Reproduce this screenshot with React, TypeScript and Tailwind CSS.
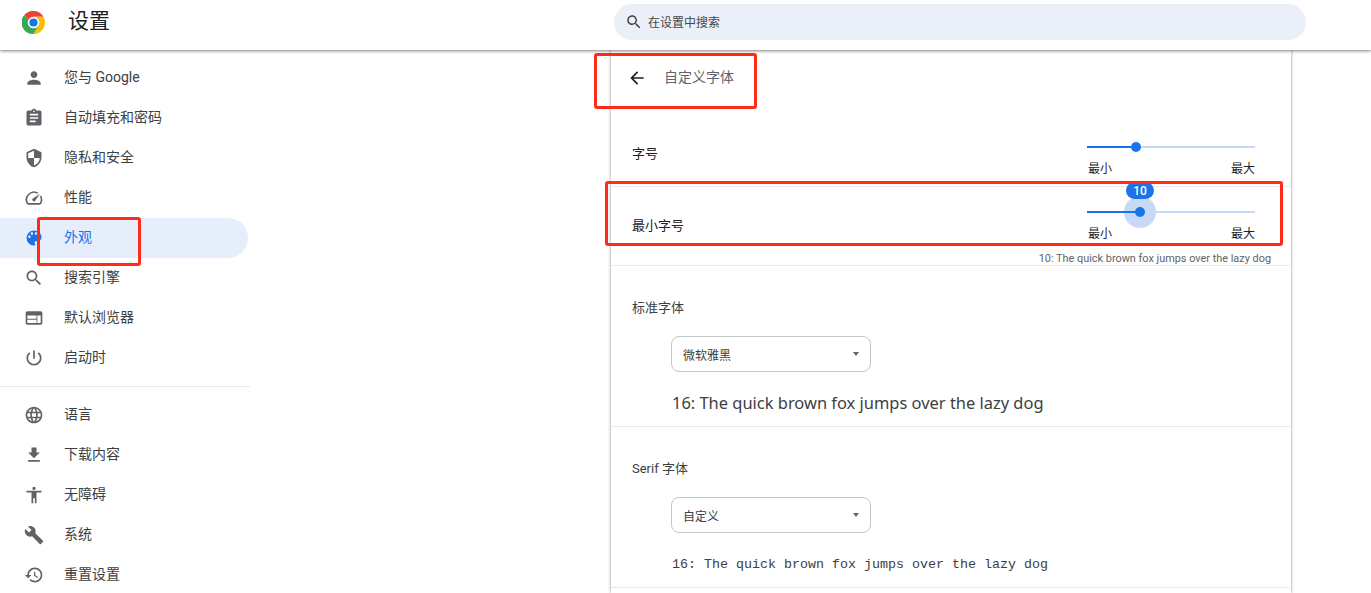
import React from 'react';

const cjk = "font-['Roboto','Noto_Sans_CJK_SC',sans-serif]";

const ICONS = {
  person: 'M12 12c2.21 0 4-1.79 4-4s-1.79-4-4-4-4 1.79-4 4 1.79 4 4 4zm0 2c-2.67 0-8 1.34-8 4v2h16v-2c0-2.66-5.33-4-8-4z',
  assignment: 'M19 3h-4.18C14.4 1.84 13.3 1 12 1c-1.3 0-2.4.84-2.82 2H5c-1.1 0-2 .9-2 2v14c0 1.1.9 2 2 2h14c1.1 0 2-.9 2-2V5c0-1.1-.9-2-2-2zm-7 0c.55 0 1 .45 1 1s-.45 1-1 1-1-.45-1-1 .45-1 1-1zm2 14H7v-2h7v2zm3-4H7v-2h10v2zm0-4H7V7h10v2z',
  shield: 'M12 1L3 5v6c0 5.55 3.84 10.74 9 12 5.16-1.26 9-6.45 9-12V5l-9-4zm0 10.99h7c-.53 4.12-3.28 7.79-7 8.94V12H5V6.3l7-3.11v8.8z',
  speed: 'M20.38 8.57l-1.23 1.85a8 8 0 0 1-.22 7.58H5.07A8 8 0 0 1 15.58 6.85l1.85-1.23A10 10 0 0 0 3.35 19a2 2 0 0 0 1.72 1h13.85a2 2 0 0 0 1.74-1 10 10 0 0 0-.27-10.44zm-9.79 6.84a2 2 0 0 0 2.83 0l5.66-8.49-8.49 5.66a2 2 0 0 0 0 2.83z',
  palette: 'M12 3a9 9 0 0 0 0 18c.83 0 1.5-.67 1.5-1.5 0-.39-.15-.74-.39-1.01-.23-.26-.38-.61-.38-.99 0-.83.67-1.5 1.5-1.5H16c2.76 0 5-2.24 5-5 0-4.42-4.03-8-9-8zm-5.5 9c-.83 0-1.5-.67-1.5-1.5S5.67 9 6.5 9 8 9.67 8 10.5 7.33 12 6.5 12zm3-4C8.67 8 8 7.33 8 6.5S8.67 5 9.5 5s1.5.67 1.5 1.5S10.33 8 9.5 8zm5 0c-.83 0-1.5-.67-1.5-1.5S13.67 5 14.5 5s1.5.67 1.5 1.5S15.33 8 14.5 8zm3 4c-.83 0-1.5-.67-1.5-1.5S16.67 9 17.5 9s1.5.67 1.5 1.5-.67 1.5-1.5 1.5z',
  search: 'M15.5 14h-.79l-.28-.27C15.41 12.59 16 11.11 16 9.5 16 5.91 13.09 3 9.5 3S3 5.91 3 9.5 5.91 16 9.5 16c1.61 0 3.09-.59 4.23-1.57l.27.28v.79l5 4.99L20.49 19l-4.99-5zm-6 0C7.01 14 5 11.99 5 9.5S7.01 5 9.5 5 14 7.01 14 9.5 11.99 14 9.5 14z',
  web: 'M20 4H4c-1.1 0-1.99.9-1.99 2L2 18c0 1.1.9 2 2 2h16c1.1 0 2-.9 2-2V6c0-1.1-.9-2-2-2zm-5 14H4v-4h11v4zm0-5H4V9h11v4zm5 5h-4V9h4v9z',
  power: 'M13 3h-2v10h2V3zm4.83 2.17l-1.42 1.42C17.99 7.86 19 9.81 19 12c0 3.87-3.13 7-7 7s-7-3.13-7-7c0-2.19 1.01-4.14 2.58-5.42L6.17 5.17C4.23 6.82 3 9.26 3 12c0 4.97 4.03 9 9 9s9-4.03 9-9c0-2.74-1.23-5.18-3.17-6.83z',
  language: 'M11.99 2C6.47 2 2 6.48 2 12s4.47 10 9.99 10C17.52 22 22 17.52 22 12S17.52 2 11.99 2zm6.93 6h-2.95c-.32-1.25-.78-2.45-1.38-3.56 1.84.63 3.37 1.91 4.33 3.56zM12 4.04c.83 1.2 1.48 2.53 1.91 3.96h-3.82c.43-1.43 1.08-2.76 1.91-3.96zM4.26 14C4.1 13.36 4 12.69 4 12s.1-1.36.26-2h3.38c-.08.66-.14 1.32-.14 2 0 .68.06 1.34.14 2H4.26zm.82 2h2.95c.32 1.25.78 2.45 1.38 3.56-1.84-.63-3.37-1.9-4.33-3.56zm2.95-8H5.08c.96-1.66 2.49-2.93 4.33-3.56C8.81 5.55 8.35 6.75 8.03 8zM12 19.96c-.83-1.2-1.48-2.53-1.91-3.96h3.82c-.43 1.43-1.08 2.76-1.91 3.96zM14.34 14H9.66c-.09-.66-.16-1.32-.16-2 0-.68.07-1.35.16-2h4.68c.09.65.16 1.32.16 2 0 .68-.07 1.34-.16 2zm.25 5.56c.6-1.11 1.06-2.31 1.38-3.56h2.95c-.96 1.65-2.49 2.93-4.33 3.56zM16.36 14c.08-.66.14-1.32.14-2 0-.68-.06-1.34-.14-2h3.38c.16.64.26 1.31.26 2s-.1 1.36-.26 2h-3.38z',
  download: 'M19 9h-4V3H9v6H5l7 7 7-7zM5 18v2h14v-2H5z',
  accessibility: 'M12 2c1.1 0 2 .9 2 2s-.9 2-2 2-2-.9-2-2 .9-2 2-2zm9 7h-6v13h-2v-6h-2v6H9V9H3V7h18v2z',
  build: 'M22.7 19l-9.1-9.1c.9-2.3.4-5-1.5-6.9-2-2-5-2.4-7.4-1.3L9 6 6 9 1.6 4.7C.4 7.1.9 10.1 2.9 12.1c1.9 1.9 4.6 2.4 6.9 1.5l9.1 9.1c.4.4 1 .4 1.4 0l2.3-2.3c.5-.4.5-1.1.1-1.4z',
  restore: 'M13 3c-4.97 0-9 4.03-9 9H1l3.89 3.89.07.14L9 12H6c0-3.87 3.13-7 7-7s7 3.13 7 7-3.13 7-7 7c-1.93 0-3.68-.79-4.94-2.06l-1.42 1.42C8.27 19.99 10.51 21 13 21c4.97 0 9-4.03 9-9s-4.03-9-9-9zm-1 5v5l4.28 2.54.72-1.21-3.5-2.08V8H12z',
  back: 'M20 11H7.83l5.59-5.59L12 4l-8 8 8 8 1.41-1.41L7.83 13H20v-2z',
};

const Icon: React.FC<{ d: string; className?: string }> = ({ d, className }) => (
  <svg viewBox="0 0 24 24" fill="currentColor" className={className}>
    <path d={d} />
  </svg>
);

const ChromeLogo = () => (
  <svg viewBox="0 0 24 24" className="w-[23px] h-[23px]">
    <path d="M12 0a12 12 0 0 1 10.39 6H12a6 6 0 0 0-5.2 3L2.2 4.4A12 12 0 0 1 12 0z" fill="#ea4335" />
    <path d="M22.39 6A12 12 0 0 1 12 24l5.2-9A6 6 0 0 0 17.2 9 6 6 0 0 0 12 6z" fill="#fbbc04" />
    <path d="M12 24A12 12 0 0 1 2.2 4.4L6.8 9a6 6 0 0 0 0 6 6 6 0 0 0 5.2 3 6 6 0 0 0 5.2-3z" fill="#34a853" />
    <circle cx="12" cy="12" r="5.4" fill="#fff" />
    <circle cx="12" cy="12" r="4.3" fill="#1a73e8" />
  </svg>
);

const MENU_TOP = [
  { icon: ICONS.person, label: '您与 Google' },
  { icon: ICONS.assignment, label: '自动填充和密码' },
  { icon: ICONS.shield, label: '隐私和安全' },
  { icon: ICONS.speed, label: '性能' },
  { icon: ICONS.palette, label: '外观', active: true },
  { icon: ICONS.search, label: '搜索引擎' },
  { icon: ICONS.web, label: '默认浏览器' },
  { icon: ICONS.power, label: '启动时' },
];

const MENU_BOTTOM = [
  { icon: ICONS.language, label: '语言' },
  { icon: ICONS.download, label: '下载内容' },
  { icon: ICONS.accessibility, label: '无障碍' },
  { icon: ICONS.build, label: '系统' },
  { icon: ICONS.restore, label: '重置设置' },
];

const MenuItem: React.FC<{ icon: string; label: string; active?: boolean }> = ({ icon, label, active }) => (
  <div className={`h-10 w-[248px] flex items-center pl-6 rounded-r-full ${active ? 'bg-[#e6eefb] text-[#1a73e8]' : 'text-[#3c4043]'}`}>
    <Icon d={icon} className={`w-5 h-5 shrink-0 ${active ? 'text-[#1a73e8]' : 'text-[#5f6368]'}`} />
    <span className="ml-5 mb-[1px] text-[14px]">{label}</span>
  </div>
);

const Slider: React.FC<{ active?: boolean }> = ({ active }) => (
  <div className="w-[168px] relative">
    <div className="h-[2px] relative">
      {active && <div className="absolute left-[37px] top-[-15px] w-8 h-8 rounded-full bg-[#c6daf7]" />}
      <div className="absolute inset-0 bg-[#c6daf7]" />
      <div className={`absolute left-0 top-0 h-[2px] bg-[#1a73e8] ${active ? 'w-[53px]' : 'w-[49px]'}`} />
      <div className={`absolute top-[-4px] w-[10px] h-[10px] rounded-full bg-[#1a73e8] ${active ? 'left-[48px]' : 'left-[44px]'}`} />
      {active && (
        <div className="absolute left-[39px] top-[-29px] w-[28px] h-[17px] rounded-full bg-[#1a73e8] text-white text-[12px] font-medium flex items-center justify-center">10</div>
      )}
    </div>
    <div className="flex justify-between mt-[13px] text-[12px] leading-[16px] text-[#202124]">
      <span className="pl-[1px]">最小</span>
      <span>最大</span>
    </div>
  </div>
);

const FontRow: React.FC<{ title: string; value: string; previewClass: string }> = ({ title, value, previewClass }) => (
  <div className="h-[161px] border-b border-[#e8eaed] pl-[21px] pt-[33px]">
    <div className="text-[13px] leading-[18px] text-[#3c4043]">{title}</div>
    <div className="ml-[39px] mt-[19px] w-[200px] h-9 rounded-lg border border-[#c4c7c5] flex items-center justify-between pl-[11px] pr-[11px]">
      <span className="text-[12px] pt-[3px] text-[#3c4043]">{value}</span>
      <span className="w-0 h-0 border-x-[3.5px] border-x-transparent border-t-[4px] border-t-[#5f6368]" />
    </div>
    <div className={`ml-[40px] mt-[19px] whitespace-nowrap text-[#3c4043] ${previewClass}`}>16: The quick brown fox jumps over the lazy dog</div>
  </div>
);

export default function App() {
  return (
    <div className={`relative w-[1371px] h-[593px] overflow-hidden bg-white flex flex-col ${cjk}`}>
      {/* header */}
      <header className="h-[50px] shrink-0 bg-white flex items-center relative z-10 shadow-[0_1px_3px_rgba(0,0,0,0.5)]">
        <div className="ml-[22px] mt-[-6px] flex items-center">
          <ChromeLogo />
        </div>
        <h1 className="ml-[23px] mt-[-6px] text-[21px] text-[#202124] w-[546px]">设置</h1>
        <div className="h-9 w-[692px] mt-[-6px] rounded-full bg-[#ebf0f8] flex items-center pl-[11px]">
          <Icon d={ICONS.search} className="w-[18px] h-[18px] text-[#444746]" />
          <span className="ml-[5px] pt-[1px] text-[12px] text-[#444746]">在设置中搜索</span>
        </div>
      </header>

      <div className="flex flex-1 min-h-0">
        {/* sidebar */}
        <nav className="w-[250px] shrink-0 pt-2">
          {MENU_TOP.map(m => <MenuItem key={m.label} {...m} />)}
          <div className="h-px bg-[#e8eaed] mt-[8px] mb-[8px] w-[250px]" />
          <div className="mt-[1px]">
            {MENU_BOTTOM.map(m => <MenuItem key={m.label} {...m} />)}
          </div>
        </nav>

        {/* card */}
        <main className="ml-[361px] w-[680px] shrink-0 bg-white shadow-[0_0_3px_rgba(0,0,0,0.45)]">
          <div className="h-[55px] flex items-center pl-[16px]">
            <Icon d={ICONS.back} className="w-5 h-5 text-[#202124]" />
            <span className="ml-[17px] mb-[1px] text-[14px] text-[#5f6368]">自定义字体</span>
          </div>

          <div className="h-[82px] border-b border-[#e8eaed] relative flex justify-end pr-[36px] pt-[41px]">
            <div className="absolute left-[21px] top-[40px] text-[13px] leading-[18px] text-[#202124]">字号</div>
            <Slider />
          </div>

          <div className="h-[79px] border-b border-[#e8eaed] relative flex justify-end pr-[36px] pt-[24px]">
            <div className="absolute left-[21px] top-[30px] text-[13px] leading-[18px] text-[#202124]">最小字号</div>
            <Slider active />
            <div className="absolute right-[20px] top-[65px] text-[10.9px] leading-[14px] text-[#5f6368] whitespace-nowrap">10: The quick brown fox jumps over the lazy dog</div>
          </div>

          <FontRow title="标准字体" value="微软雅黑" previewClass="text-[16.45px] leading-[24px] font-['Noto_Sans',sans-serif]" />
          <FontRow title="Serif 字体" value="自定义" previewClass="text-[13.33px] leading-[26px] font-['Liberation_Mono',monospace]" />
        </main>
      </div>

      {/* red annotation boxes over the screenshot */}
      <div className="absolute left-[594px] top-[53px] w-[163px] h-[56px] border-[3px] border-[#ff2a1a] rounded-[3px] z-20" />
      <div className="absolute left-[605px] top-[181px] w-[678px] h-[65px] border-[3px] border-[#ff2a1a] rounded-[3px] z-20" />
      <div className="absolute left-[37px] top-[217px] w-[104px] h-[49px] border-[3px] border-[#ff2a1a] rounded-[3px] z-20" />
    </div>
  );
}
